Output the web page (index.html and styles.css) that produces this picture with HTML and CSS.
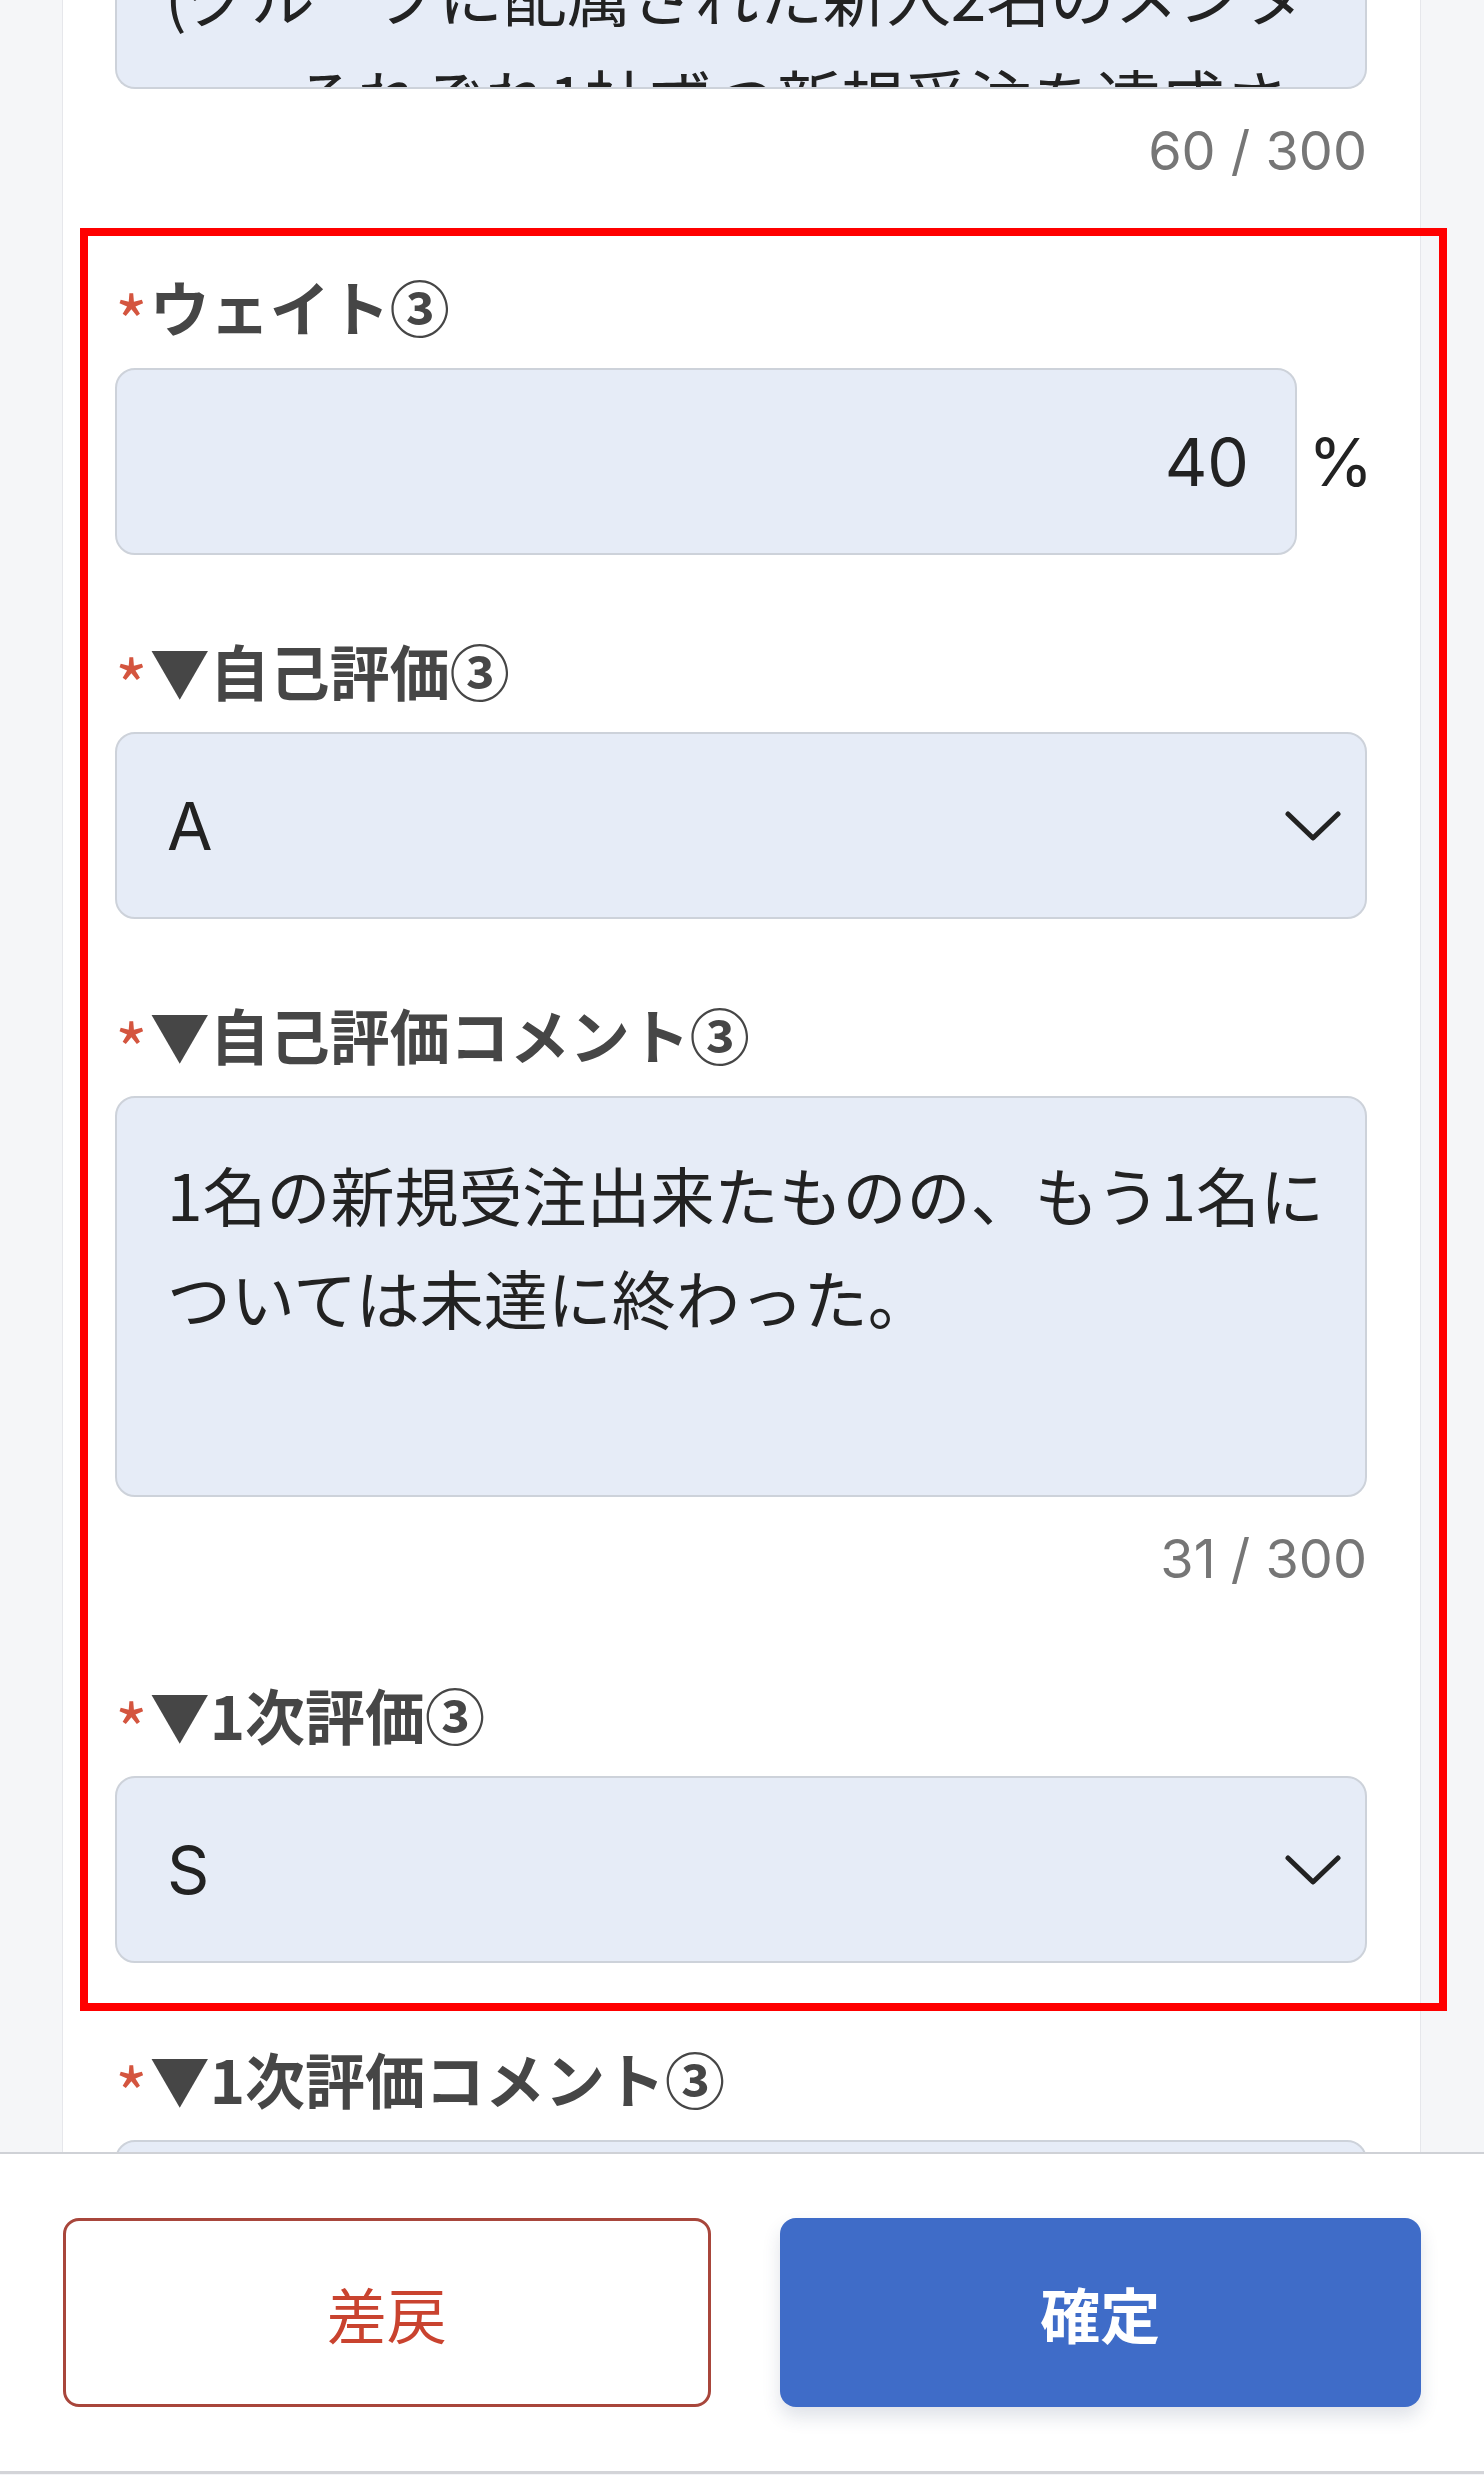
FILE: index.html
```html
<!DOCTYPE html>
<html lang="ja">
    <head>
        <title>目標評価入力</title>
        <meta charset="utf-8">
        <meta name="viewport" content="width=device-width, initial-scale=1">
        <link rel="stylesheet" href="styles.css">
    </head>
    <body>

        <div class="screen">
            <main class="scroll">
                <div class="card">

                    <!-- previous field, scrolled half out of view -->
                    <div class="field">
                        <div class="box ta-cut">
                            <div class="ta-lines">
                                <div>(グループに配属された新人2名のメンタ</div>
                                <div>　　それぞれ1社ずつ新規受注を達成さ</div>
                            </div>
                        </div>
                        <div class="count">60 / 300</div>
                    </div>

                    <div class="highlight">
                        <div class="field">
                            <label class="label"><span class="req">*</span>ウェイト③</label>
                            <div class="with-unit">
                                <div class="box control input num">40</div>
                                <span class="unit">%</span>
                            </div>
                        </div>

                        <div class="field">
                            <label class="label"><span class="req">*</span>▼自己評価③</label>
                            <div class="box control input select">
                                <span>A</span>
                                <svg class="chev" width="56" height="30" viewBox="0 0 56 30"><polyline points="3,3 28,27 53,3" fill="none" stroke="#222" stroke-width="5" stroke-linecap="round" stroke-linejoin="round"/></svg>
                            </div>
                        </div>

                        <div class="field">
                            <label class="label"><span class="req">*</span>▼自己評価コメント③</label>
                            <div class="box control ta">
                                <div>1名の新規受注出来たものの、もう1名に</div>
                                <div>ついては未達に終わった。</div>
                            </div>
                            <div class="count">31 / 300</div>
                        </div>

                        <div class="field">
                            <label class="label"><span class="req">*</span>▼1次評価③</label>
                            <div class="box control input select">
                                <span>S</span>
                                <svg class="chev" width="56" height="30" viewBox="0 0 56 30"><polyline points="3,3 28,27 53,3" fill="none" stroke="#222" stroke-width="5" stroke-linecap="round" stroke-linejoin="round"/></svg>
                            </div>
                        </div>
                    </div>

                    <div class="field">
                        <label class="label"><span class="req">*</span>▼1次評価コメント③</label>
                        <div class="box control ta"></div>
                    </div>

                </div>
            </main>

            <footer class="actions">
                <button class="btn btn-back" type="button">差戻</button>
                <button class="btn btn-ok" type="button">確定</button>
            </footer>
        </div>

    </body>
</html>
```

FILE: styles.css
```css
* {
    box-sizing: border-box;
}
html, body {
    margin: 0;
}
body {
    width: 1484px;
    height: 2475px;
    overflow: hidden;
    background-color: #f5f6f8;
    font-family: "Noto Sans CJK JP", sans-serif;
    color: #222;
}
.screen {
    display: flex;
    flex-direction: column;
    height: 2475px;
}
/* scrolling form area, cut off by the action bar */
.scroll {
    flex: 0 0 2152px;
    overflow: hidden;
}
.card {
    min-height: 100%;
    margin: 0 63px 0 62px;
    padding: 0 53px 0 52px;
    background-color: #fff;
    border-left: 1px solid #e6e7eb;
    border-right: 1px solid #e6e7eb;
}
.field {
    margin-bottom: 75px;
}
.label {
    display: block;
    height: 80px;
    line-height: 80px;
    font-size: 60px;
    font-weight: 700;
    color: #464646;
    white-space: nowrap;
}
.req {
    font-size: 70px;
    color: #d4553f;
    font-weight: 400;
    vertical-align: -17px;
    margin-right: 2px;
}
/* form controls */
.box {
    background-color: #e6ecf7;
    border: 2px solid #cdd2da;
    border-radius: 20px;
}
.control {
    margin-top: 22px;
}
.input {
    height: 187px;
    display: flex;
    align-items: center;
    padding: 0 50px;
    font-family: "Inter", "Noto Sans CJK JP", sans-serif;
    font-size: 66px;
    color: #222;
}
.num {
    justify-content: flex-end;
    padding-right: 46px;
}
.select {
    justify-content: space-between;
    padding-right: 24px;
}
.with-unit {
    display: flex;
    align-items: center;
    margin-top: 22px;
    margin-right: -6px;
}
.with-unit .control {
    flex: 1;
    margin-top: 0;
}
.unit {
    flex: 0 0 76px;
    text-align: right;
    font-family: "Inter", sans-serif;
    font-size: 66px;
    color: #222;
}
.ta {
    height: 401px;
    padding: 44px 50px;
    font-size: 64px;
    line-height: 103px;
    white-space: nowrap;
}
.ta-cut {
    height: 89px;
    overflow: hidden;
    border-top: 0;
    border-radius: 0 0 20px 20px;
    padding: 0 48px;
}
.ta-lines {
    margin-top: -58px;
    font-size: 64px;
    line-height: 103px;
    white-space: nowrap;
}
.count {
    margin-top: 22px;
    height: 80px;
    line-height: 80px;
    text-align: right;
    font-family: "Inter", sans-serif;
    font-size: 54px;
    color: #767676;
}
/* red annotation frame laid over the three edited fields */
.highlight {
    position: relative;
    margin-bottom: 75px;
}
.highlight .field:last-child {
    margin-bottom: 0;
}
.highlight:after {
    content: "";
    position: absolute;
    top: -38px;
    bottom: -48px;
    left: -35px;
    right: -80px;
    border: 8px solid #ff0000;
}
/* bottom action bar */
.actions {
    display: flex;
    gap: 69px;
    padding: 64px 63px;
    background-color: #fff;
    border-top: 2px solid #cfd1d6;
    border-bottom: 3px solid #d3d4d8;
}
.btn {
    flex: 1;
    height: 189px;
    border-radius: 16px;
    font-family: "Noto Sans CJK JP", sans-serif;
    font-size: 60px;
    cursor: pointer;
}
.btn-back {
    background-color: #fff;
    border: 3px solid #a8463b;
    color: #c9432f;
    font-weight: 400;
}
.btn-ok {
    background-color: #3f6cc8;
    border: none;
    color: #fff;
    font-weight: 700;
    box-shadow: 0 10px 18px rgba(40, 60, 100, 0.15);
}
```
